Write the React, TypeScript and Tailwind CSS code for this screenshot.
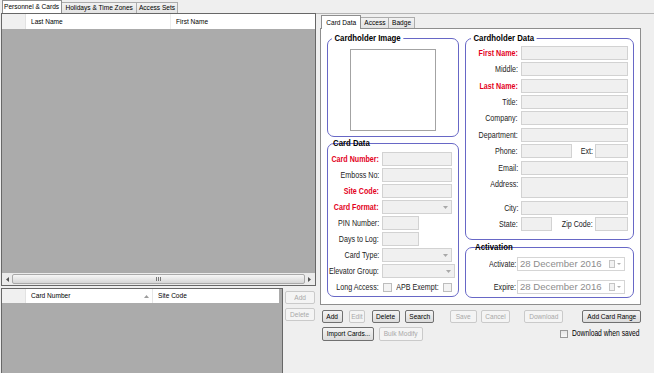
import React from "react";

const FONT = "font-['Liberation_Sans',Arial,sans-serif]";

function T({
  children,
  o = "origin-left",
  className = "",
}: {
  children: React.ReactNode;
  o?: string;
  className?: string;
}) {
  return <span className={`inline-block whitespace-nowrap scale-x-[0.82] ${o} ${className}`}>{children}</span>;
}

function Group({
  title,
  strike,
  titleLeft,
  className,
  children,
}: {
  title: string;
  strike?: boolean;
  titleLeft: string;
  className: string;
  children?: React.ReactNode;
}) {
  return (
    <div className={`relative border border-[#6767c6] rounded-[7px] ${className}`}>
      <span
        className={`absolute top-[-7px] text-[9.5px] font-bold leading-[12px] text-black whitespace-nowrap scale-x-[0.82] origin-left ${titleLeft} ${
          strike ? "" : "bg-white px-[3px]"
        }`}
      >
        {title}
      </span>
      {children}
    </div>
  );
}

function Input({ className = "" }: { className?: string }) {
  return <div className={`h-[14px] border border-[#d2d2d2] bg-[#f0f0f0] shrink-0 ${className}`} />;
}

function Select({ className = "" }: { className?: string }) {
  return (
    <div className={`h-[14px] border border-[#d2d2d2] bg-[#f0f0f0] shrink-0 flex items-center justify-end pr-[3px] ${className}`}>
      <svg width="5" height="3" viewBox="0 0 5 3">
        <path d="M0 0h5L2.5 3z" fill="#a8a8a8" />
      </svg>
    </div>
  );
}

function Check({ className = "" }: { className?: string }) {
  return <div className={`w-[9px] h-[9px] border border-[#bdbdbd] bg-[#f3f3f3] shrink-0 ${className}`} />;
}

function Label({ children, red, className }: { children: React.ReactNode; red?: boolean; className: string }) {
  return (
    <span
      className={`text-[8.7px] leading-[14px] whitespace-nowrap shrink-0 flex justify-end ${
        red ? "text-[#e3001b] font-bold" : "text-[#222]"
      } ${className}`}
    >
      <T o="origin-right">{children}</T>
    </span>
  );
}

function Btn({ children, disabled, className }: { children: React.ReactNode; disabled?: boolean; className: string }) {
  return (
    <div
      className={`h-full flex items-center justify-center rounded-[2px] border text-[8px] whitespace-nowrap shrink-0 ${
        disabled
          ? "border-[#cacaca] bg-[#f4f4f4] text-[#a8a8a8]"
          : "border-[#707070] bg-linear-to-b from-[#f4f4f4] to-[#dcdcdc] text-black"
      } ${className}`}
    >
      <T o="origin-center">{children}</T>
    </div>
  );
}

function DatePicker() {
  return (
    <div className="ml-[1px] h-[14px] w-[108px] border border-[#d5d5d5] bg-white flex items-center pl-[2px] pr-[3px]">
      <span className="text-[9.6px] leading-none text-[#8d8d8d] whitespace-nowrap">28 December 2016</span>
      <div className="ml-auto w-[6px] h-[8px] border border-[#c4c4c4] bg-[#f2f2f2]" />
      <svg className="ml-[2px]" width="4" height="2" viewBox="0 0 4 2">
        <path d="M0 0h4L2 2z" fill="#b0b0b0" />
      </svg>
    </div>
  );
}

function Scrollbar() {
  return (
    <div className="h-[12px] flex items-center bg-[#ebebeb] shrink-0 px-[1px]">
      <div className="w-[9px] h-full flex items-center justify-center">
        <svg width="3" height="5" viewBox="0 0 3 5">
          <path d="M3 0v5L0 2.5z" fill="#555" />
        </svg>
      </div>
      <div className="flex-1 h-[10px] rounded-[2px] border border-[#a9a9a9] bg-linear-to-b from-[#f7f7f7] to-[#d6d6d6] flex items-center justify-center gap-[1px]">
        <div className="w-[1px] h-[4px] bg-[#777]" />
        <div className="w-[1px] h-[4px] bg-[#777]" />
        <div className="w-[1px] h-[4px] bg-[#777]" />
      </div>
      <div className="w-[9px] h-full flex items-center justify-center">
        <svg width="3" height="5" viewBox="0 0 3 5">
          <path d="M0 0v5L3 2.5z" fill="#555" />
        </svg>
      </div>
    </div>
  );
}

function Row({ children, className = "" }: { children: React.ReactNode; className?: string }) {
  return <div className={`flex items-center h-[14px] shrink-0 ${className}`}>{children}</div>;
}

function Tab({ children, className }: { children: React.ReactNode; className: string }) {
  return (
    <div className={`flex items-center justify-center whitespace-nowrap shrink-0 ${className}`}>
      <T o="origin-center">{children}</T>
    </div>
  );
}

export default function App() {
  return (
    <div className={`w-[654px] h-[373px] overflow-hidden bg-[#efefef] text-[8px] leading-none text-black ${FONT} flex flex-col`}>
      {/* top level tabs */}
      <div className="h-[13px] flex items-end pl-[2px] shrink-0">
        <Tab className="h-[13px] w-[60px] bg-white border border-b-0 border-[#8f8f8f]">Personnel &amp; Cards</Tab>
        <Tab className="h-[11px] w-[75px] bg-linear-to-b from-[#f2f2f2] to-[#e3e3e3] border border-b-0 border-l-0 border-[#acacac]">
          Holidays &amp; Time Zones
        </Tab>
        <Tab className="h-[11px] w-[41px] bg-linear-to-b from-[#f2f2f2] to-[#e3e3e3] border border-b-0 border-l-0 border-[#acacac]">
          Access Sets
        </Tab>
      </div>

      <div className="flex-1 flex min-h-0">
        {/* left column */}
        <div className="w-[316px] pl-[1px] flex flex-col shrink-0">
          <div className="w-[315px] h-[273px] border border-[#676767] flex flex-col shrink-0">
            <div className="h-[15px] flex bg-white shrink-0">
              <div className="w-[24px] bg-[#f0f0f0] border-r border-[#e2e2e2]" />
              <div className="w-[145px] pl-[5px] flex items-center border-r border-[#ececec]">
                <T>Last Name</T>
              </div>
              <div className="flex-1 pl-[5px] flex items-center">
                <T>First Name</T>
              </div>
            </div>
            <div className="flex-1 bg-[#ababab]" />
            <Scrollbar />
          </div>

          <div className="flex mt-[2px] flex-1 min-h-0">
            <div className="w-[282px] h-[90px] border border-[#676767] flex flex-col bg-[#ababab] shrink-0">
              <div className="h-[14px] flex shrink-0">
                <div className="w-[24px] bg-[#f0f0f0] border-r border-[#e2e2e2]" />
                <div className="w-[127px] pl-[5px] pr-[3px] flex items-center justify-between bg-white border-r border-[#e6e6e6]">
                  <T>Card Number</T>
                  <svg width="5" height="3" viewBox="0 0 5 3">
                    <path d="M0 3h5L2.5 0z" fill="#9c9c9c" />
                  </svg>
                </div>
                <div className="w-[126px] pl-[5px] flex items-center bg-white">
                  <T>Site Code</T>
                </div>
              </div>
            </div>
            <div className="ml-[2px] w-[30px] flex flex-col">
              <div className="mt-[3px] h-[13px]">
                <Btn disabled className="w-[30px]">Add</Btn>
              </div>
              <div className="mt-[4px] h-[13px]">
                <Btn disabled className="w-[30px]">Delete</Btn>
              </div>
            </div>
          </div>
        </div>

        {/* right column */}
        <div className="flex-1 flex flex-col border-t border-[#b4b4b4] pt-[1px]">
          <div className="h-[13px] flex items-end pl-[5px] shrink-0">
            <Tab className="h-[14px] w-[40px] mb-[-1px] relative z-10 bg-white border border-b-0 border-[#8e8e8e]">Card Data</Tab>
            <Tab className="h-[11px] w-[28px] bg-linear-to-b from-[#f2f2f2] to-[#e3e3e3] border border-b-0 border-l-0 border-[#acacac]">
              Access
            </Tab>
            <Tab className="h-[11px] w-[26px] bg-linear-to-b from-[#f2f2f2] to-[#e3e3e3] border border-b-0 border-l-0 border-[#acacac]">
              Badge
            </Tab>
          </div>

          <div className="ml-[4px] w-[321px] h-[277px] bg-white border border-[#8e8e8e] flex px-[6px] pt-[9px] gap-[6px] shrink-0">
            {/* column 1 */}
            <div className="w-[132px] flex flex-col shrink-0">
              <Group title="Cardholder Image" titleLeft="left-[4px]" className="h-[99px] shrink-0">
                <div className="mt-[10px] mx-auto w-[86px] h-[82px] border border-[#a3a3a3] bg-white" />
              </Group>
              <Group title="Card Data" strike titleLeft="left-[5px]" className="mt-[6px] h-[154px] shrink-0">
                <div className="pt-[8px] flex flex-col gap-[2px]">
                  <Row>
                    <Label red className="w-[51px]">Card Number:</Label>
                    <Input className="ml-[3px] w-[70px]" />
                  </Row>
                  <Row>
                    <Label className="w-[51px]">Emboss No:</Label>
                    <Input className="ml-[3px] w-[70px]" />
                  </Row>
                  <Row>
                    <Label red className="w-[51px]">Site Code:</Label>
                    <Input className="ml-[3px] w-[70px]" />
                  </Row>
                  <Row>
                    <Label red className="w-[51px]">Card Format:</Label>
                    <Select className="ml-[3px] w-[70px]" />
                  </Row>
                  <Row>
                    <Label className="w-[51px]">PIN Number:</Label>
                    <Input className="ml-[3px] w-[37px]" />
                  </Row>
                  <Row>
                    <Label className="w-[51px]">Days to Log:</Label>
                    <Input className="ml-[3px] w-[37px]" />
                  </Row>
                  <Row>
                    <Label className="w-[51px]">Card Type:</Label>
                    <Select className="ml-[3px] w-[70px]" />
                  </Row>
                  <Row>
                    <Label className="w-[51px]">Elevator Group:</Label>
                    <Select className="ml-[3px] w-[73px]" />
                  </Row>
                  <Row>
                    <Label className="w-[51px]">Long Access:</Label>
                    <Check className="ml-[4px]" />
                    <Label className="w-[47px]">APB Exempt:</Label>
                    <Check className="ml-[4px]" />
                  </Row>
                </div>
              </Group>
            </div>

            {/* column 2 */}
            <div className="w-[169px] flex flex-col shrink-0">
              <Group title="Cardholder Data" titleLeft="left-[5px]" className="h-[202px] shrink-0">
                <div className="pt-[7px] flex flex-col">
                  <Row>
                    <Label red className="w-[52px]">First Name:</Label>
                    <Input className="ml-[3px] w-[107px]" />
                  </Row>
                  <Row className="mt-[2px]">
                    <Label className="w-[52px]">Middle:</Label>
                    <Input className="ml-[3px] w-[107px]" />
                  </Row>
                  <Row className="mt-[3px]">
                    <Label red className="w-[52px]">Last Name:</Label>
                    <Input className="ml-[3px] w-[107px]" />
                  </Row>
                  <Row className="mt-[2px]">
                    <Label className="w-[52px]">Title:</Label>
                    <Input className="ml-[3px] w-[107px]" />
                  </Row>
                  <Row className="mt-[2px]">
                    <Label className="w-[52px]">Company:</Label>
                    <Input className="ml-[3px] w-[107px]" />
                  </Row>
                  <Row className="mt-[3px]">
                    <Label className="w-[52px]">Department:</Label>
                    <Input className="ml-[3px] w-[107px]" />
                  </Row>
                  <Row className="mt-[2px]">
                    <Label className="w-[52px]">Phone:</Label>
                    <Input className="ml-[3px] w-[51px]" />
                    <Label className="w-[21px]">Ext:</Label>
                    <Input className="ml-[2px] w-[33px]" />
                  </Row>
                  <Row className="mt-[3px]">
                    <Label className="w-[52px]">Email:</Label>
                    <Input className="ml-[3px] w-[107px]" />
                  </Row>
                  <div className="mt-[2px] flex items-start h-[21px] shrink-0">
                    <Label className="w-[52px]">Address:</Label>
                    <div className="ml-[3px] w-[107px] h-[21px] border border-[#d2d2d2] bg-[#f0f0f0]" />
                  </div>
                  <Row className="mt-[3px]">
                    <Label className="w-[52px]">City:</Label>
                    <Input className="ml-[3px] w-[107px]" />
                  </Row>
                  <Row className="mt-[2px]">
                    <Label className="w-[52px]">State:</Label>
                    <Input className="ml-[3px] w-[31px]" />
                    <Label className="w-[41px]">Zip Code:</Label>
                    <Input className="ml-[2px] w-[33px]" />
                  </Row>
                </div>
              </Group>
              <Group title="Activation" strike titleLeft="left-[9px]" className="mt-[7px] h-[51px] shrink-0">
                <div className="pt-[9px] flex flex-col">
                  <Row>
                    <Label className="w-[50px]">Activate:</Label>
                    <DatePicker />
                  </Row>
                  <Row className="mt-[9px]">
                    <Label className="w-[50px]">Expire:</Label>
                    <DatePicker />
                  </Row>
                </div>
              </Group>
            </div>
          </div>

          {/* buttons row 1 */}
          <div className="mt-[5px] h-[13px] flex pl-[6px] shrink-0">
            <Btn className="w-[21px]">Add</Btn>
            <Btn disabled className="ml-[6px] w-[16px]">Edit</Btn>
            <Btn className="ml-[7px] w-[28px]">Delete</Btn>
            <Btn className="ml-[5px] w-[29px]">Search</Btn>
            <Btn disabled className="ml-[16px] w-[27px]">Save</Btn>
            <Btn disabled className="ml-[4px] w-[29px]">Cancel</Btn>
            <Btn disabled className="ml-[14px] w-[39px]">Download</Btn>
            <Btn className="ml-[19px] w-[59px]">Add Card Range</Btn>
          </div>
          {/* buttons row 2 */}
          <div className="mt-[4px] h-[14px] flex items-center pl-[6px] shrink-0">
            <Btn className="w-[52px]">Import Cards...</Btn>
            <Btn disabled className="ml-[5px] w-[44px]">Bulk Modify</Btn>
            <div className="ml-[137px] w-[8px] h-[8px] border border-[#9a9a9a] bg-linear-to-b from-[#e6e6e6] to-[#f8f8f8] shrink-0" />
            <span className="ml-[4px] text-[8.2px]">
              <T>Download when saved</T>
            </span>
          </div>
        </div>
      </div>
    </div>
  );
}
